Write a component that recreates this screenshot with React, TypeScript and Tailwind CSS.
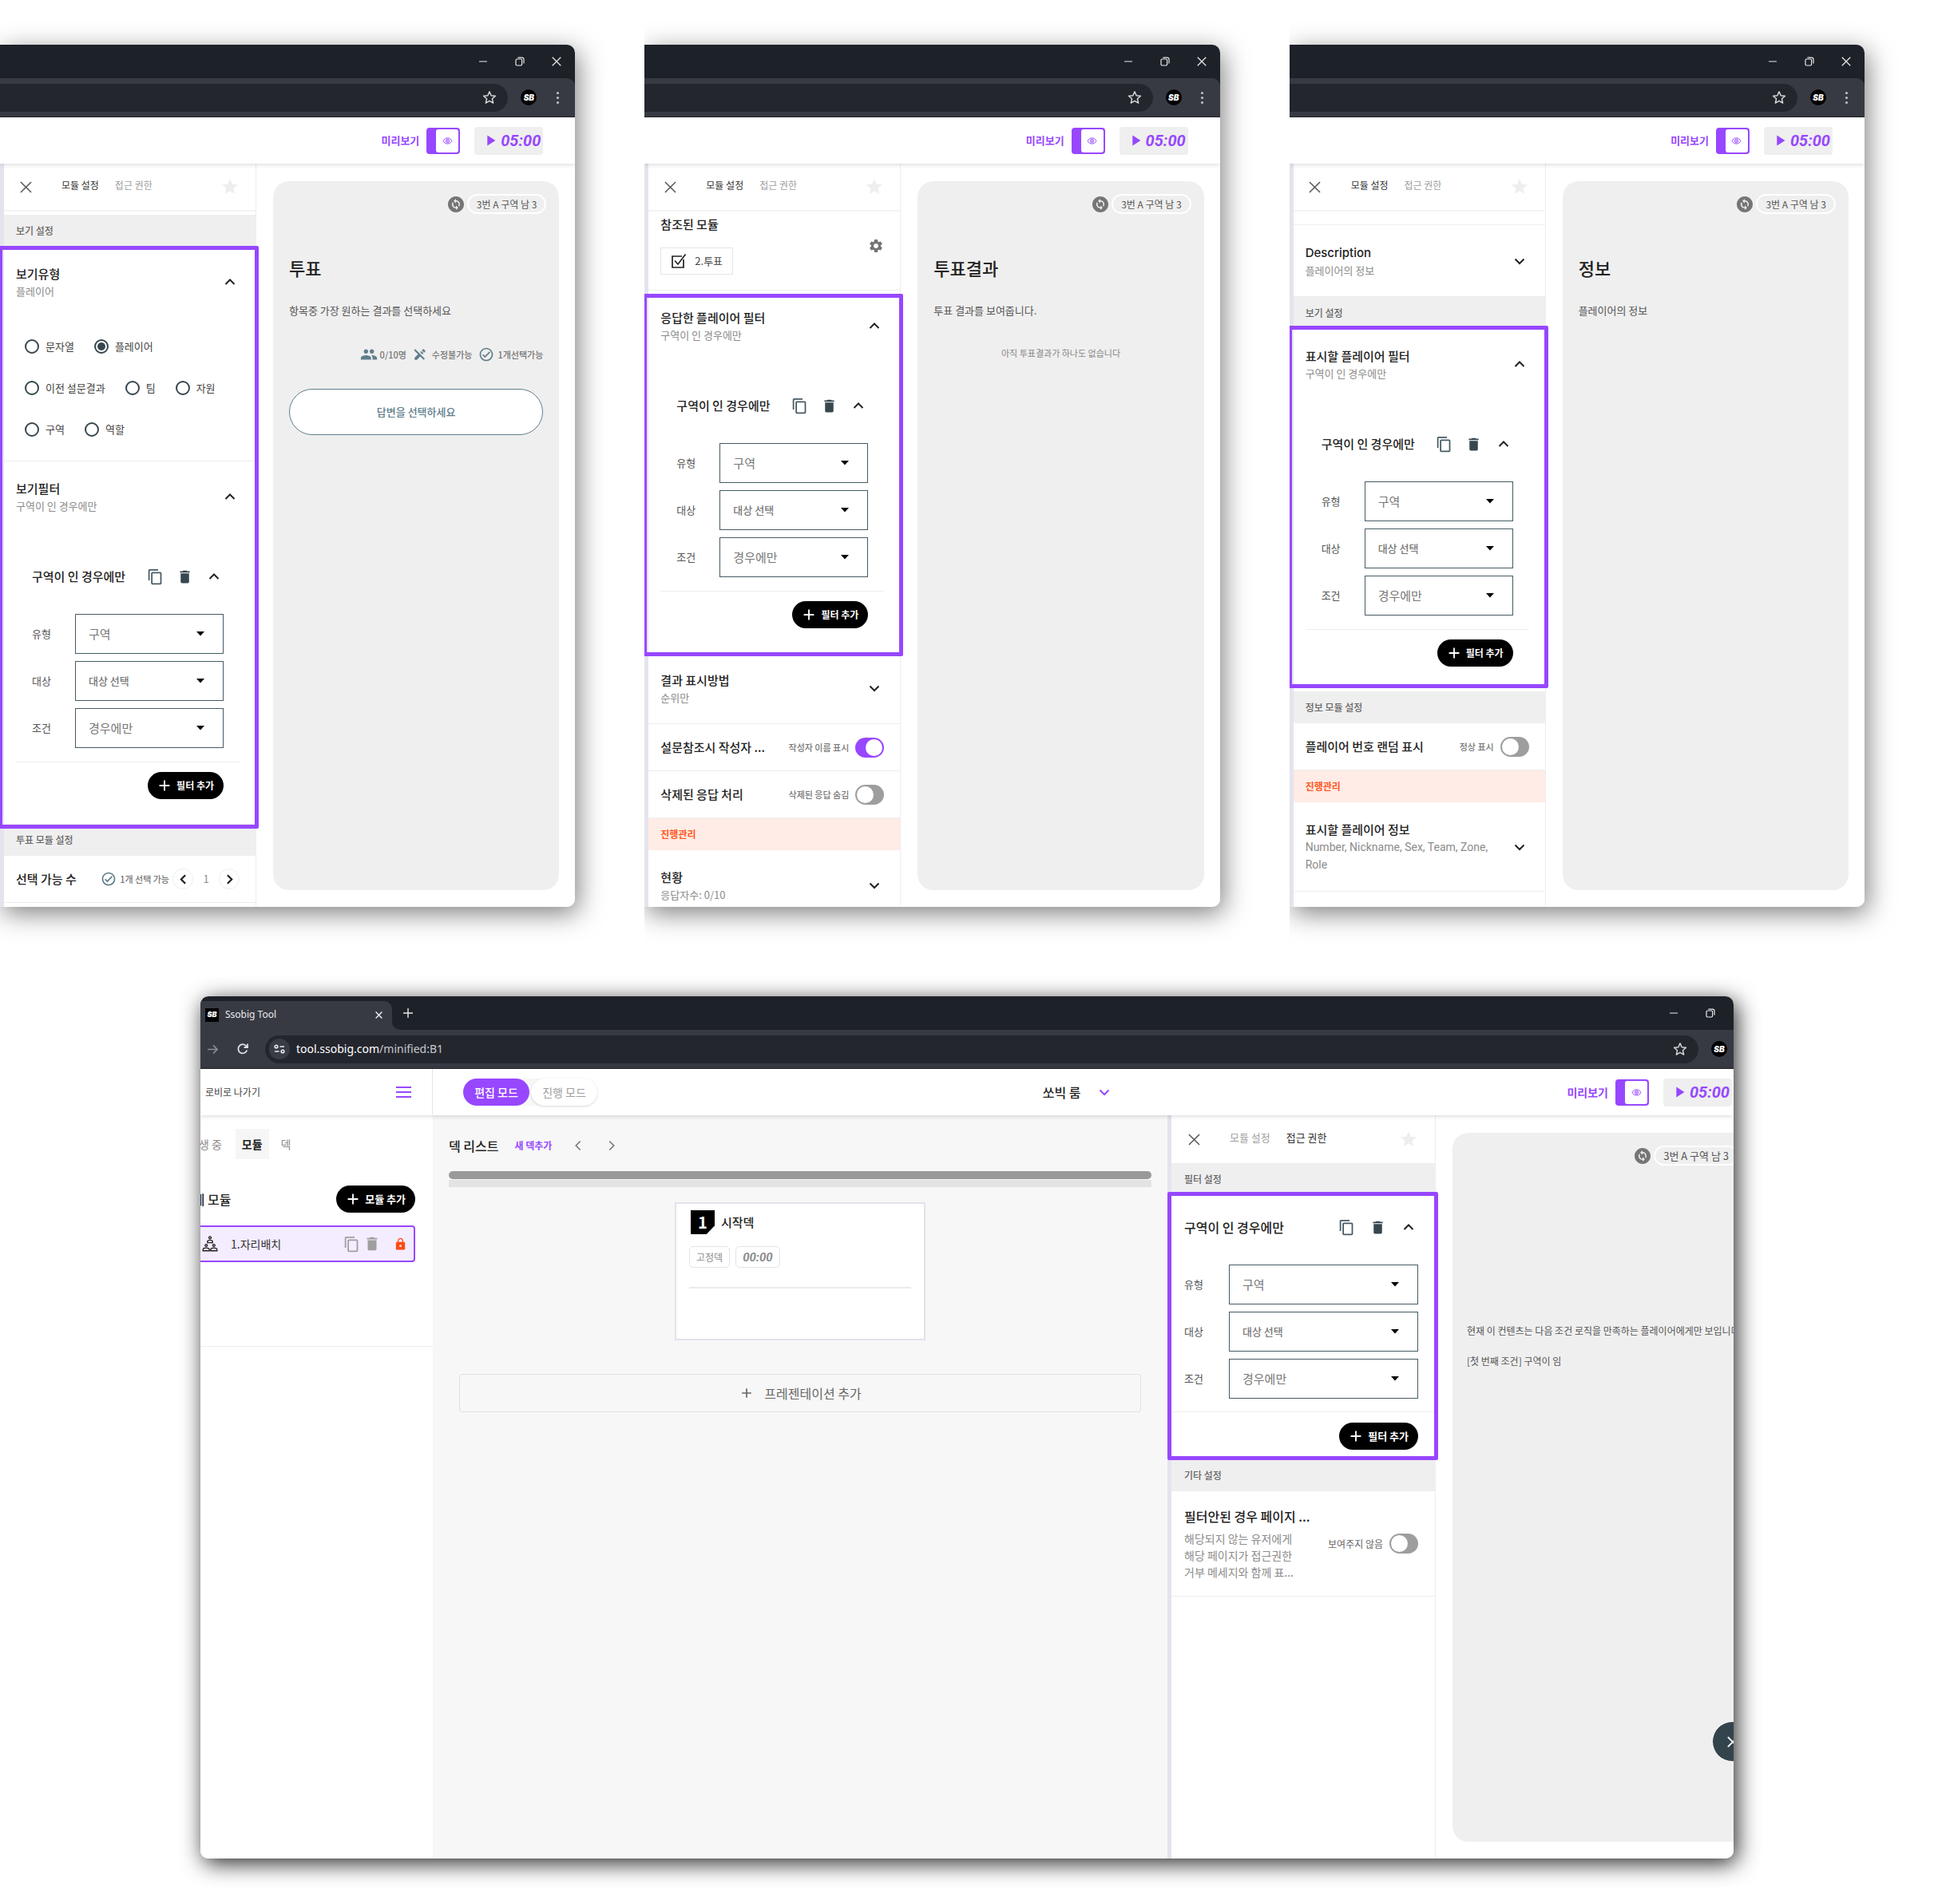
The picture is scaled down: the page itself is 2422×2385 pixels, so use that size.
import React, { useId } from 'react';
import {
  MdAdd,
  MdChangeCircle,
  MdContentCopy,
  MdDelete,
  MdEditOff,
  MdGroup,
  MdLock,
  MdOutlineCheckCircle,
  MdPlayArrow,
  MdSettings,
  MdStar,
} from 'react-icons/md';

/*
 * Each window sets its own density through CSS variables:
 * --l / --r   side padding of the settings panel
 * --title     row titles, --sub captions, --tab tabs and header labels, --btn pill buttons
 */

type Dir = 'up' | 'down' | 'left' | 'right';

const CHEVRON_POINTS: Record<Dir, string> = {
  up: '6.500,15 12,9.500 17.500,15',
  down: '6.500,9.500 12,15 17.500,9.500',
  left: '15,6 9,12 15,18',
  right: '9,6 15,12 9,18',
};

function Chevron({ dir, className = 'size-6 text-[#222222]', width = 2 }: { dir: Dir; className?: string; width?: number }) {
  return (
    <svg viewBox="0 0 24 24" className={className} fill="none" stroke="currentColor" strokeWidth={width} aria-hidden="true">
      <polyline points={CHEVRON_POINTS[dir]} />
    </svg>
  );
}

function Cross({ className, width = 1.5 }: { className: string; width?: number }) {
  return (
    <svg viewBox="0 0 16 16" className={className} fill="none" stroke="currentColor" strokeWidth={width} aria-hidden="true">
      <path d="M1 1 15 15M15 1 1 15" />
    </svg>
  );
}

/* ---------- Browser chrome ---------- */

function WindowButtons() {
  return (
    <div className="ml-auto flex h-full items-center pr-3 text-[#e8eaed]">
      <button aria-label="최소화" className="flex w-[46px] justify-center">
        <svg viewBox="0 0 12 12" className="size-3" stroke="currentColor" strokeWidth="1.2">
          <path d="M1 6h10" />
        </svg>
      </button>
      <button aria-label="이전 크기로 복원" className="flex w-[46px] justify-center">
        <svg viewBox="0 0 12 12" className="size-3" fill="none" stroke="currentColor" strokeWidth="1.2">
          <rect x="1" y="3" width="7.6" height="8" rx="1.4" />
          <path d="M3.4 1.2h5.2a2.4 2.4 0 0 1 2.4 2.4v5" />
        </svg>
      </button>
      <button aria-label="닫기" className="-mr-3 flex w-[46px] justify-center">
        <Cross className="size-3" width={1.7} />
      </button>
    </div>
  );
}

function Brand({ className }: { className: string }) {
  return (
    <span className={`flex items-center justify-center bg-black font-['Inter',sans-serif] font-black italic text-white ${className}`}>
      SB
    </span>
  );
}

function Browser({ full = false }: { full?: boolean }) {
  return (
    <div className={full ? 'w-[calc(100%+40px)] bg-[#1d2128]' : 'w-full bg-[#1d2128]'}>
      <div className="flex h-[42px] items-center">
        {full && (
          <div className="flex h-full items-end">
            <div className="flex h-9 w-[240px] items-center rounded-tr-[10px] bg-[#383a43] pb-0.5 pl-1.5">
              <Brand className="h-[17px] w-[17px] text-[9px]" />
              <span className="ml-2 font-['Noto_Sans','Noto_Sans_CJK_KR',sans-serif] text-[12px] leading-4 text-[#e8eaed]">Ssobig Tool</span>
              <button aria-label="탭 닫기" className="ml-auto mr-3 text-[#e8eaed]">
                <Cross className="size-[9px]" width={2.6} />
              </button>
            </div>
            <div className="size-2.5 bg-[#383a43]">
              <div className="size-2.5 rounded-bl-[10px] bg-[#1d2128]" />
            </div>
            <button aria-label="새 탭" className="flex h-9 items-center pb-1.5 pl-1 text-[#e8eaed]">
              <svg viewBox="0 0 12 12" className="size-3" stroke="currentColor" strokeWidth="1.4">
                <path d="M0 6h12M6 0v12" />
              </svg>
            </button>
          </div>
        )}
        <WindowButtons />
      </div>
      <div className="flex h-[49px] items-center rounded-tr-[10px] border-b border-[#24262d] bg-[#383a43]">
        {full && (
          <div className="flex w-[81px] items-center gap-6 pl-[9px]">
            <svg viewBox="0 0 14 14" className="size-[13px] text-[#8b8d94]" fill="none" stroke="currentColor" strokeWidth="1.7">
              <path d="M0 7h12.500M7.500 1.500 13 7l-5.500 5.500" />
            </svg>
            <svg viewBox="0 0 14 14" className="size-[14px] text-[#dfe1e5]" fill="none" stroke="currentColor" strokeWidth="1.8">
              <path d="M12.300 8.500A5.600 5.600 0 1 1 11.400 3.400L12.800 5M13 .6V5H8.600" />
            </svg>
          </div>
        )}
        <div
          className={
            full
              ? 'flex h-[35px] flex-1 items-center rounded-full bg-[#24262e] pl-[5px]'
              : 'flex h-[35px] flex-1 items-center rounded-r-full bg-[#24262e]'
          }
        >
          {full && (
            <>
              <span className="flex size-[26px] items-center justify-center rounded-full bg-[#3a3c45] text-[#e8eaed]">
                <svg viewBox="0 0 14 12" className="h-3 w-[14px]" fill="none" stroke="currentColor" strokeWidth="1.6">
                  <circle cx="3" cy="3" r="1.800" />
                  <path d="M7.500 3H13M1 9h5.500" />
                  <circle cx="11" cy="9" r="1.800" />
                </svg>
              </span>
              <span className="ml-2 font-['Noto_Sans','Noto_Sans_CJK_KR',sans-serif] text-[14px] leading-5 text-[#c7c9ce]">
                <span className="text-[#ffffff]">tool.ssobig.com</span>/minified:B1
              </span>
            </>
          )}
          <svg viewBox="0 0 24 24" className="ml-auto mr-[14px] size-[18px] text-[#d5d7db]" fill="none" stroke="currentColor" strokeWidth="2" strokeLinejoin="round">
            <path d="m12 2.500 2.900 6.500 7 .7-5.300 4.700 1.600 7-6.200-3.700-6.200 3.700 1.600-7L2.100 9.700l7-.7z" />
          </svg>
        </div>
        <Brand className="ml-4 size-5 rounded-full text-[10px]" />
        <button aria-label="메뉴" className="ml-[22px] mr-[18px] flex w-2 flex-col items-center gap-[3px]">
          <span className="size-[3px] rounded-full bg-[#c3c5ca]" />
          <span className="size-[3px] rounded-full bg-[#c3c5ca]" />
          <span className="size-[3px] rounded-full bg-[#c3c5ca]" />
        </button>
      </div>
    </div>
  );
}

/* ---------- App header controls ---------- */

function HeaderTools() {
  return (
    <div className="ml-auto flex items-center pr-10">
      <span className="text-(length:--label) font-bold leading-5 text-[#9747ff]">미리보기</span>
      <button aria-label="미리보기 전환" className="ml-[9px] flex h-[33px] w-[42px] justify-end rounded-[4px] bg-[#9747ff] p-0.5">
        <span className="flex h-full w-7 items-center justify-center rounded-[3px] bg-white text-[#9747ff]">
          <svg viewBox="0 0 14 10" className="h-[9px] w-[13px]" fill="none" stroke="currentColor" strokeWidth="1.1">
            <path d="M1 5c1.300-2.600 3.500-4 6-4s4.700 1.400 6 4c-1.300 2.600-3.500 4-6 4S2.300 7.600 1 5z" />
            <circle cx="7" cy="5" r="2.400" />
            <circle cx="7" cy="5" r="0.700" />
          </svg>
        </span>
      </button>
      <button className="ml-[18px] flex h-[35px] w-[86px] items-center justify-end rounded-[4px] bg-[#efefef] pr-[3px] text-[#9747ff]">
        <MdPlayArrow className="size-[22px] shrink-0" aria-hidden="true" />
        <span className="ml-0.5 font-['Roboto',sans-serif] text-[20px] font-bold italic leading-6">05:00</span>
      </button>
    </div>
  );
}

/* ---------- Settings panel pieces ---------- */

function PanelTabs({ active, line = true }: { active: 'module' | 'access'; line?: boolean }) {
  const on = 'text-[#333333]';
  const off = 'text-[#9e9e9e]';
  return (
    <div className={`flex h-[60px] shrink-0 items-center pl-(--l) pr-(--r) ${line ? 'border-b-2 border-[#f3f3f3]' : ''}`}>
      <button aria-label="닫기" className="flex size-6 items-center justify-center text-[#555555]">
        <Cross className="size-[15px]" width={1.6} />
      </button>
      <div className="ml-[33px] flex gap-5 pb-1 text-(length:--tab) leading-5">
        <button className={active === 'module' ? on : off}>모듈 설정</button>
        <button className={active === 'access' ? on : off}>접근 권한</button>
      </div>
      <button aria-label="즐겨찾기" className="ml-auto text-[#eeeeee]">
        <MdStar className="size-6" />
      </button>
    </div>
  );
}

function Band({ children, warn = false }: { children: React.ReactNode; warn?: boolean }) {
  return (
    <div
      className={
        warn
          ? 'flex h-10 shrink-0 items-center bg-[#ffece6] pl-(--l) text-[12px] font-bold leading-5 text-[#ff5722]'
          : 'flex h-10 shrink-0 items-center bg-[#efefef] pl-(--l) text-[12px] font-medium leading-5 text-[#666666]'
      }
    >
      {children}
    </div>
  );
}

function AccordionHead({ title, sub, open = false, latin = false }: { title: string; sub: React.ReactNode; open?: boolean; latin?: boolean }) {
  return (
    <div className={`flex shrink-0 items-center pb-[22px] pl-(--l) pr-(--r) pt-[22px] ${open ? '' : 'border-b border-[#eeeeee]'}`}>
      <div className="min-w-0 flex-1">
        <h3 className="text-(length:--title) font-medium leading-[23px] text-[#222222]">
          {latin ? <span className="font-['Inter',sans-serif]">{title}</span> : title}
        </h3>
        <div className="pr-4 text-(length:--sub) leading-[21px] text-[#8c8c8c]">{sub}</div>
      </div>
      <button aria-label={open ? `${title} 접기` : `${title} 펼치기`}>
        <Chevron dir={open ? 'up' : 'down'} />
      </button>
    </div>
  );
}

function PillButton({ children }: { children: React.ReactNode }) {
  return (
    <button className="flex h-[34px] items-center gap-1 rounded-full bg-black pl-2.5 pr-3 text-(length:--btn) font-bold leading-5 text-white">
      <MdAdd className="size-[22px]" aria-hidden="true" />
      {children}
    </button>
  );
}

function FilterSelect({ label, value, small = false }: { label: string; value: string; small?: boolean }) {
  const id = useId();
  return (
    <div className="flex h-[50px] items-center">
      <label htmlFor={id} className="w-(--field) shrink-0 text-[13px] leading-5 text-[#555555]">
        {label}
      </label>
      <div className="relative h-full flex-1">
        <select
          id={id}
          className={`size-full appearance-none border border-[#455a64] bg-white pl-4 text-[#777777] ${small ? 'text-[13px] font-medium' : 'text-[15px]'}`}
        >
          <option>{value}</option>
        </select>
        <svg viewBox="0 0 10 6" className="pointer-events-none absolute right-6 top-[22px] h-[6px] w-[10px]" aria-hidden="true">
          <path d="M0 0h10L5 5.500z" fill="#000" />
        </svg>
      </div>
    </div>
  );
}

function FilterHead() {
  return (
    <div className="flex items-center gap-(--icons)">
      <h4 className="flex-1 text-(length:--title) font-medium leading-6 text-[#222222]">구역이 인 경우에만</h4>
      <button aria-label="복사" className="flex size-6 items-center justify-center text-[#455a64]">
        <MdContentCopy className="size-[21px]" />
      </button>
      <button aria-label="삭제" className="flex size-6 items-center justify-center text-[#37474f]">
        <MdDelete className="size-[21px]" />
      </button>
      <button aria-label="접기">
        <Chevron dir="up" />
      </button>
    </div>
  );
}

function FilterFields() {
  return (
    <div className="flex flex-col gap-[9px]">
      <FilterSelect label="유형" value="구역" />
      <FilterSelect label="대상" value="대상 선택" small />
      <FilterSelect label="조건" value="경우에만" />
    </div>
  );
}

function FilterAccordion({ title }: { title: string }) {
  return (
    <>
      <AccordionHead title={title} sub="구역이 인 경우에만" open />
      <div className="pl-(--l) pr-(--r) pt-11">
        <div className="px-5">
          <FilterHead />
          <div className="mt-[35px]">
            <FilterFields />
          </div>
        </div>
        <div className="mt-[17px] flex justify-end border-t border-[#eeeeee] px-5 pb-[31px] pt-3">
          <PillButton>필터 추가</PillButton>
        </div>
      </div>
    </>
  );
}

function Highlight({ className }: { className: string }) {
  return <div className={`pointer-events-none absolute z-10 rounded-[2px] border-[5px] border-[#9747ff] ${className}`} />;
}

function ToggleRow({ title, note, on = false }: { title: string; note: string; on?: boolean }) {
  const id = useId();
  return (
    <div className="flex h-[59px] shrink-0 items-center border-b border-[#eeeeee] pl-(--l) pr-(--r)">
      <h3 className="text-(length:--title) font-medium leading-6 text-[#222222]">{title}</h3>
      <label htmlFor={id} className="ml-auto text-[11px] font-medium leading-5 text-[#777777]">
        {note}
      </label>
      <Toggle id={id} on={on} />
    </div>
  );
}

function Toggle({ id, on }: { id: string; on: boolean }) {
  return (
    <input
      id={id}
      type="checkbox"
      role="switch"
      defaultChecked={on}
      className="ml-2 h-[25px] w-9 shrink-0 appearance-none rounded-full bg-[#9e9e9e] p-0.5 before:block before:size-[21px] before:rounded-full before:bg-white checked:bg-[#9747ff] checked:before:ml-[11px]"
    />
  );
}

function Radio({ label, checked = false }: { label: string; checked?: boolean }) {
  return (
    <label className="flex items-center gap-2 text-[13px] leading-5 text-[#444444]">
      <input
        type="radio"
        name="option-type"
        defaultChecked={checked}
        className="flex size-[18px] appearance-none items-center justify-center rounded-full border-2 border-[#37474f] before:size-2.5 before:rounded-full checked:before:bg-[#37474f]"
      />
      {label}
    </label>
  );
}

/* ---------- Preview ---------- */

function PlayerChip() {
  return (
    <div className="flex items-center justify-end gap-0.5">
      <MdChangeCircle className="size-6 text-[#757575]" aria-hidden="true" />
      <span className="flex h-[25px] items-center rounded-full border-2 border-white px-2.5 text-(length:--tab) leading-4 text-[#555555]">3번 A 구역 남 3</span>
    </div>
  );
}

function Preview({ title, desc, children }: { title: string; desc: string; children?: React.ReactNode }) {
  return (
    <main className="flex flex-1 flex-col pb-[21px] pl-[21px] pr-5 pt-[22px]">
      <div className="flex flex-1 flex-col rounded-[20px] bg-[#efefef] px-5 pt-4">
        <div className="-mr-1">
          <PlayerChip />
        </div>
        <h2 className="mt-[51px] text-[22px] font-medium leading-8 text-[#222222]">{title}</h2>
        <p className="mt-7 text-[13px] leading-5 text-[#555555]">{desc}</p>
        {children}
      </div>
    </main>
  );
}

function SmallWindow({ children, preview }: { children: React.ReactNode; preview: React.ReactNode }) {
  return (
    <div className="overflow-hidden pb-14 pr-[87px] pt-14">
      <article className="flex h-[1080px] flex-col rounded-r-[10px] shadow-[4px_8px_32px_rgba(0,0,0,0.5)] [--btn:12px] [--field:54px] [--icons:13px] [--l:15px] [--label:13px] [--r:20px] [--sub:13px] [--tab:12px] [--title:15px]">
        <div className="flex min-h-0 flex-1 flex-col overflow-hidden rounded-r-[10px] bg-white">
          <Browser />
          <header className="relative z-20 flex h-[58px] shrink-0 items-center bg-white shadow-[0_1px_6px_rgba(0,0,0,0.16)]">
            <HeaderTools />
          </header>
          <div className="flex min-h-0 flex-1">
            <aside className="flex w-[321px] shrink-0 flex-col border-l-[5px] border-r border-l-[#e4e4ee] border-r-[#eeeeee]">
              <PanelTabs active="module" />
              {children}
            </aside>
            {preview}
          </div>
        </div>
      </article>
    </div>
  );
}

function VoteWindow() {
  return (
    <SmallWindow
      preview={
        <Preview title="투표" desc="항목중 가장 원하는 결과를 선택하세요">
          <div className="mt-[34px] flex items-center justify-end text-[11px] font-medium leading-5 text-[#757575]">
            <MdGroup className="size-[22px] text-[#607d8b]" aria-hidden="true" />
            <span className="ml-[3px]">0/10명</span>
            <MdEditOff className="ml-2 size-[18px] text-[#607d8b]" aria-hidden="true" />
            <span className="ml-1.5">수정불가능</span>
            <MdOutlineCheckCircle className="ml-2 size-5 text-[#607d8b]" aria-hidden="true" />
            <span className="ml-1">1개선택가능</span>
          </div>
          <button className="mt-8 h-[58px] rounded-full border border-[#607d8b] bg-white text-[13px] font-medium leading-5 text-[#607d8b]">
            답변을 선택하세요
          </button>
        </Preview>
      }
    >
      <div className="pt-1">
        <Band>보기 설정</Band>
      </div>
      <div className="relative">
        <Highlight className="-bottom-1.5 -left-[7px] -right-1 -top-px" />
        <section className="border-b border-[#eeeeee]">
          <AccordionHead title="보기유형" sub="플레이어" open />
          <fieldset aria-label="보기유형" className="flex flex-col pb-[13px] pl-[26px] pt-[11px]">
            <div className="flex h-[52px] items-center gap-[25px]">
              <Radio label="문자열" />
              <Radio label="플레이어" checked />
            </div>
            <div className="flex h-[52px] items-center gap-[25px]">
              <Radio label="이전 설문결과" />
              <Radio label="팀" />
              <Radio label="자원" />
            </div>
            <div className="flex h-[52px] items-center gap-[25px]">
              <Radio label="구역" />
              <Radio label="역할" />
            </div>
          </fieldset>
        </section>
        <section>
          <FilterAccordion title="보기필터" />
        </section>
      </div>
      <Band>투표 모듈 설정</Band>
      <div className="flex h-[59px] shrink-0 items-center border-b border-[#eeeeee] pl-(--l) pr-(--r)">
        <h3 className="text-(length:--title) font-medium leading-6 text-[#222222]">선택 가능 수</h3>
        <MdOutlineCheckCircle className="ml-auto size-5 text-[#607d8b]" aria-hidden="true" />
        <span className="ml-1 text-[11px] font-medium leading-5 text-[#777777]">1개 선택 가능</span>
        <button aria-label="감소" className="ml-1 flex size-[26px] items-center justify-center rounded-full border border-[#eeeeee]">
          <Chevron dir="left" className="size-[21px] text-[#222222]" width={2.6} />
        </button>
        <output className="w-8 text-center text-[13px] leading-5 text-[#8c8c8c]">1</output>
        <button aria-label="증가" className="flex size-[26px] items-center justify-center rounded-full border border-[#eeeeee]">
          <Chevron dir="right" className="size-[21px] text-[#222222]" width={2.6} />
        </button>
      </div>
    </SmallWindow>
  );
}

function ResultWindow() {
  return (
    <SmallWindow
      preview={
        <Preview title="투표결과" desc="투표 결과를 보여줍니다.">
          <p className="mt-[33px] text-center text-[11px] leading-5 text-[#888888]">아직 투표결과가 하나도 없습니다</p>
        </Preview>
      }
    >
      <section className="flex h-[99px] shrink-0 items-center justify-between border-b border-[#eeeeee] pl-(--l) pr-(--r)">
        <div className="pb-[15px]">
          <h3 className="text-(length:--title) font-medium leading-6 text-[#222222]">참조된 모듈</h3>
          <div className="mt-[17px] flex h-[34px] items-center gap-2.5 border border-[#e5e5e5] px-3">
            <svg viewBox="0 0 20 20" className="size-5 text-[#222222]" fill="none" stroke="currentColor" strokeWidth="1.7" aria-hidden="true">
              <path d="M14 4H2v14h14V8" />
              <path d="m5 9.500 4 4.500L18.500 1.500" />
            </svg>
            <span className="text-[13px] leading-5 text-[#444444]">2.투표</span>
          </div>
        </div>
        <button aria-label="설정" className="mb-3 text-[#757575]">
          <MdSettings className="size-5" />
        </button>
      </section>
      <div className="relative shrink-0">
        <Highlight className="-bottom-1 -left-[7px] -right-1 top-1" />
        <FilterAccordion title="응답한 플레이어 필터" />
      </div>
      <AccordionHead title="결과 표시방법" sub="순위만" />
      <ToggleRow title="설문참조시 작성자 ..." note="작성자 이름 표시" on />
      <ToggleRow title="삭제된 응답 처리" note="삭제된 응답 숨김" />
      <Band warn>진행관리</Band>
      <AccordionHead title="현황" sub="응답자수: 0/10" />
    </SmallWindow>
  );
}

function InfoWindow() {
  return (
    <SmallWindow preview={<Preview title="정보" desc="플레이어의 정보" />}>
      <div className="h-[17px] shrink-0 border-b border-[#eeeeee]" />
      <AccordionHead title="Description" sub="플레이어의 정보" latin />
      <Band>보기 설정</Band>
      <div className="relative shrink-0">
        <Highlight className="-left-[7px] -right-1 -top-1 bottom-1" />
        <FilterAccordion title="표시할 플레이어 필터" />
      </div>
      <Band>정보 모듈 설정</Band>
      <ToggleRow title="플레이어 번호 랜덤 표시" note="정상 표시" />
      <Band warn>진행관리</Band>
      <AccordionHead
        title="표시할 플레이어 정보"
        sub={<span className="font-['Roboto',sans-serif] text-[14px]">Number, Nickname, Sex, Team, Zone, Role</span>}
      />
    </SmallWindow>
  );
}

/* ---------- Full editor window ---------- */

function Sidebar() {
  return (
    <nav className="w-[291px] shrink-0 overflow-hidden bg-white">
      <div className="flex h-[290px] flex-col border-b border-[#eeeeee] pr-[22px]">
        <div className="mt-[17px] flex items-center text-[14px] leading-5 text-[#8c8c8c]">
          <button className="-ml-[15px] whitespace-nowrap">재생 중</button>
          <button className="ml-[17px] h-[38px] bg-[#f6f6f6] px-2 font-bold text-[#222222]">모듈</button>
          <button className="ml-[15px]">덱</button>
        </div>
        <div className="mt-[33px] flex items-center justify-between">
          <h2 className="-ml-6 whitespace-nowrap text-[16px] font-medium leading-6 text-[#222222]">전체 모듈</h2>
          <PillButton>모듈 추가</PillButton>
        </div>
        <div className="-ml-3 mt-4 flex h-[46px] items-center rounded-[4px] border-2 border-[#9747ff] bg-[#f4ecff] pl-3 pr-2">
          <svg viewBox="0 0 20 20" className="size-5 text-[#222222]" fill="none" stroke="currentColor" strokeWidth="1.400" aria-hidden="true">
            <circle cx="10" cy="2.300" r="1.400" />
            <path d="M6.800 8.600V7.400c0-1.300 1-2 3.200-2s3.200.7 3.200 2v1.200z" />
            <circle cx="5.200" cy="12" r="1.400" />
            <path d="M1.200 18.800v-1.400c0-1.500 1.300-2.300 4-2.300s4 .8 4 2.300v1.400z" />
            <circle cx="14.800" cy="12" r="1.400" />
            <path d="M10.800 18.800v-1.400c0-1.500 1.300-2.300 4-2.300s4 .8 4 2.300v1.400z" />
          </svg>
          <span className="ml-4 text-[14px] leading-5 text-[#333333]">1.자리배치</span>
          <button aria-label="복사" className="ml-auto text-[#9e9e9e]">
            <MdContentCopy className="size-[21px]" />
          </button>
          <button aria-label="삭제" className="ml-1 text-[#9e9e9e]">
            <MdDelete className="size-[22px]" />
          </button>
          <MdLock className="ml-4 size-[17px] text-[#ff4a12]" aria-label="잠김" />
        </div>
      </div>
    </nav>
  );
}

function DeckArea() {
  return (
    <section className="min-w-0 flex-1 bg-[#f7f7f7] px-5">
      <div className="flex h-[70px] items-center pt-1.5">
        <h2 className="text-[16px] font-medium leading-6 text-[#222222]">덱 리스트</h2>
        <button className="ml-5 text-[12px] font-bold leading-5 text-[#9747ff]">새 덱추가</button>
        <button aria-label="이전" className="ml-[22px]">
          <Chevron dir="left" className="size-[22px] text-[#777777]" width={1.800} />
        </button>
        <button aria-label="다음" className="ml-5">
          <Chevron dir="right" className="size-[22px] text-[#777777]" width={1.800} />
        </button>
      </div>
      <div className="h-2.5 rounded-full bg-[#999999]" />
      <div className="mt-px h-[9px] bg-[#e3e3e3]" />
      <div className="mx-auto mt-[19px] h-[173px] w-[314px] border-2 border-[#e3e3ec] bg-white px-4 pt-2">
        <div className="flex items-center">
          <span className="ml-0.5 flex size-[30px] items-center justify-center bg-black text-[20px] font-bold leading-6 text-white [clip-path:polygon(0_0,100%_0,100%_64%,66%_100%,0_100%)]">
            1
          </span>
          <h3 className="ml-2 text-[15px] font-medium leading-6 text-[#222222]">시작덱</h3>
        </div>
        <div className="mt-[15px] flex gap-[7px] text-[#8c8c8c]">
          <span className="flex h-[27px] items-center rounded-[5px] border border-[#e3e3ec] px-2 text-[12px] leading-4">고정덱</span>
          <span className="flex h-[27px] items-center rounded-[5px] border border-[#e3e3ec] px-2 font-['Roboto',sans-serif] text-[15px] font-bold italic leading-4">
            00:00
          </span>
        </div>
        <div className="mt-6 border-t-2 border-[#ebebf1]" />
      </div>
      <div className="mt-[42px] px-[13px]">
        <button className="flex h-12 w-full items-center justify-center gap-3 rounded-[4px] border border-[#e1e1e6] text-[16px] leading-6 text-[#666666]">
          <MdAdd className="size-5" aria-hidden="true" />
          프레젠테이션 추가
        </button>
      </div>
    </section>
  );
}

function AccessPanel() {
  const id = useId();
  return (
    <aside className="flex w-[336px] shrink-0 flex-col border-l-[5px] border-r border-l-[#e4e4ee] border-r-[#eeeeee] bg-white">
      <PanelTabs active="access" line={false} />
      <Band>필터 설정</Band>
      <div className="relative">
        <Highlight className="-bottom-px -left-[5px] -right-1 -top-1" />
        <div className="pb-4 pl-(--l) pr-(--r) pt-7">
          <FilterHead />
          <div className="mt-[35px]">
            <FilterFields />
          </div>
        </div>
        <div className="flex justify-end border-t border-[#eeeeee] pb-3 pl-(--l) pr-(--r) pt-[13px]">
          <PillButton>필터 추가</PillButton>
        </div>
      </div>
      <Band>기타 설정</Band>
      <div className="flex h-[132px] shrink-0 items-center border-b border-[#eeeeee] pl-(--l) pr-(--r)">
        <div className="w-[162px] whitespace-nowrap">
          <h3 className="text-(length:--title) font-medium leading-6 text-[#222222]">필터안된 경우 페이지 ...</h3>
          <p className="mt-1.5 text-(length:--sub) leading-[21px] text-[#8c8c8c]">
            해당되지 않는 유저에게
            <br />
            해당 페이지가 접근권한
            <br />
            거부 메세지와 함께 표...
          </p>
        </div>
        <label htmlFor={id} className="ml-auto text-[12px] leading-5 text-[#666666]">
          보여주지 않음
        </label>
        <Toggle id={id} on={false} />
      </div>
    </aside>
  );
}

function EditorWindow() {
  return (
    <article className="mx-auto h-[1080px] w-[calc(100%-502px)] rounded-[10px] shadow-[4px_6px_28px_rgba(0,0,0,0.85)] [--btn:13px] [--field:56px] [--icons:15px] [--l:16px] [--label:14px] [--r:21px] [--sub:14px] [--tab:13px] [--title:16px]">
      <div className="relative flex h-full flex-col overflow-hidden rounded-[10px] bg-white">
        <Browser full />
        <header className="relative z-20 grid h-[58px] shrink-0 grid-cols-[291px_minmax(0,1fr)_minmax(0,1fr)] items-center bg-white shadow-[0_1px_6px_rgba(0,0,0,0.16)]">
          <div className="flex h-full items-center justify-between border-r border-[#e4e4ee] pl-1.5 pr-[26px]">
            <a href="#lobby" className="text-[12px] leading-5 text-[#444444]">
              로비로 나가기
            </a>
            <button aria-label="메뉴" className="flex w-[19px] flex-col gap-1">
              <span className="h-0.5 bg-[#9747ff]" />
              <span className="h-0.5 bg-[#9747ff]" />
              <span className="h-0.5 bg-[#9747ff]" />
            </button>
          </div>
          <div className="flex items-center pl-[38px]">
            <div className="flex rounded-full bg-[#f7f7f7] text-[14px] leading-5">
              <button className="h-[34px] w-[83px] rounded-full bg-[#9747ff] font-medium text-white">편집 모드</button>
              <button className="ml-0.5 h-[34px] w-[83px] rounded-full bg-white text-[#9e9e9e] shadow-[0_1px_3px_rgba(0,0,0,0.16)]">진행 모드</button>
            </div>
            <h1 className="ml-auto mr-[3px] text-[16px] font-medium leading-6 text-[#222222]">쏘빅 룸</h1>
          </div>
          <div className="-mr-[38px] flex items-center">
            <button aria-label="룸 선택" className="ml-[14px] text-[#9747ff]">
              <Chevron dir="down" className="size-6" width={2} />
            </button>
            <HeaderTools />
          </div>
        </header>
        <div className="flex min-h-0 flex-1">
          <Sidebar />
          <DeckArea />
          <AccessPanel />
          <main className="-mr-6 flex w-[397px] shrink-0 flex-col pb-[21px] pl-[21px] pt-[22px]">
            <div className="flex flex-1 flex-col whitespace-nowrap rounded-l-[20px] bg-[#efefef] px-[18px] pt-4">
              <PlayerChip />
              <p className="mt-[197px] text-[12px] leading-5 text-[#555555]">현재 이 컨텐츠는 다음 조건 로직을 만족하는 플레이어에게만 보입니다</p>
              <p className="mt-[18px] text-[12px] leading-5 text-[#555555]">[첫 번째 조건] 구역이 임</p>
            </div>
          </main>
        </div>
        <button
          aria-label="닫기"
          className="absolute -right-6 bottom-[121px] z-30 flex size-[51px] items-center justify-center rounded-full border border-white bg-[#33444c] text-white"
        >
          <Cross className="size-[14px]" width={2.200} />
        </button>
      </div>
    </article>
  );
}

export default function App() {
  return (
    <div className="overflow-hidden bg-white pb-14 font-['Noto_Sans_CJK_KR','Noto_Sans',sans-serif]">
      <div className="grid grid-cols-3">
        <VoteWindow />
        <ResultWindow />
        <InfoWindow />
      </div>
      <div className="pt-14">
        <EditorWindow />
      </div>
    </div>
  );
}
